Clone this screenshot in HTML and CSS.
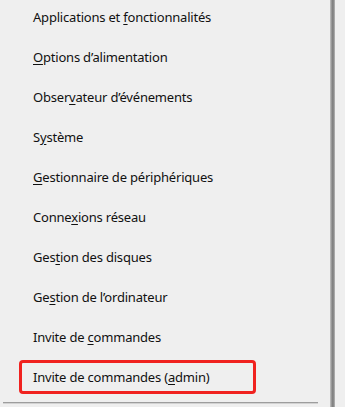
FILE: index.html
```html
<!DOCTYPE html>
<html lang="fr">
<head>
  <meta charset="UTF-8" />
  <meta name="viewport" content="width=device-width, initial-scale=1.0"/>
  <title>Menu Windows + X</title>
  <link rel="stylesheet" href="styles.css">
</head>
<body>
  <div class="menu">
    <ul class="items">
      <li class="item"><span>Applications et <u>f</u>onctionnalités</span></li>
      <li class="item"><span><u>O</u>ptions d’alimentation</span></li>
      <li class="item"><span>Obser<u>v</u>ateur d’événements</span></li>
      <li class="item"><span>S<u>y</u>stème</span></li>
      <li class="item"><span><u>G</u>estionnaire de périphériques</span></li>
      <li class="item"><span>Conne<u>x</u>ions réseau</span></li>
      <li class="item"><span>Ges<u>t</u>ion des disques</span></li>
      <li class="item"><span>Ge<u>s</u>tion de l’ordinateur</span></li>
      <li class="item"><span>Invite de <u>c</u>ommandes</span></li>
      <li class="item selected"><span>Invite de commandes (<u>a</u>dmin)</span></li>
    </ul>
    <div class="separator"></div>
  </div>
  <div class="edge"></div>
</body>
</html>
```

FILE: styles.css
```css
body {
  margin: 0;
  height: 100vh;
  overflow: hidden;
  display: flex;
  background: #efefef;
  font-family: "Noto Sans", "Open Sans", sans-serif;
  font-size: 13px;
  letter-spacing: -0.2px;
  color: #111;
}

.menu {
  width: 330px;
  flex: none;
}

.items {
  list-style: none;
  margin: -3px 0 0;
  padding: 0;
}

.item {
  height: 40px;
  display: flex;
  align-items: center;
  padding-left: 33px;
  box-sizing: border-box;
}

.item u {
  text-decoration-thickness: 1px;
  text-underline-offset: 2px;
}

.item.selected {
  padding-left: 19px;
}

.item.selected span {
  display: flex;
  align-items: center;
  white-space: pre;
  width: 237px;
  height: 34px;
  box-sizing: border-box;
  padding-left: 11px;
  border: 3px solid #f0221f;
  border-radius: 4px;
}

.separator {
  margin: 5px 12px 0 3px;
  height: 1px;
  background: #9d9d9d;
  border-bottom: 1px solid #d2d2d2;
}

.edge {
  width: 5px;
  flex: none;
  background: linear-gradient(to right, #c4c4c4, #8a8a8a 40%, #7a7a7a 60%, #b8b8b8);
}
```
